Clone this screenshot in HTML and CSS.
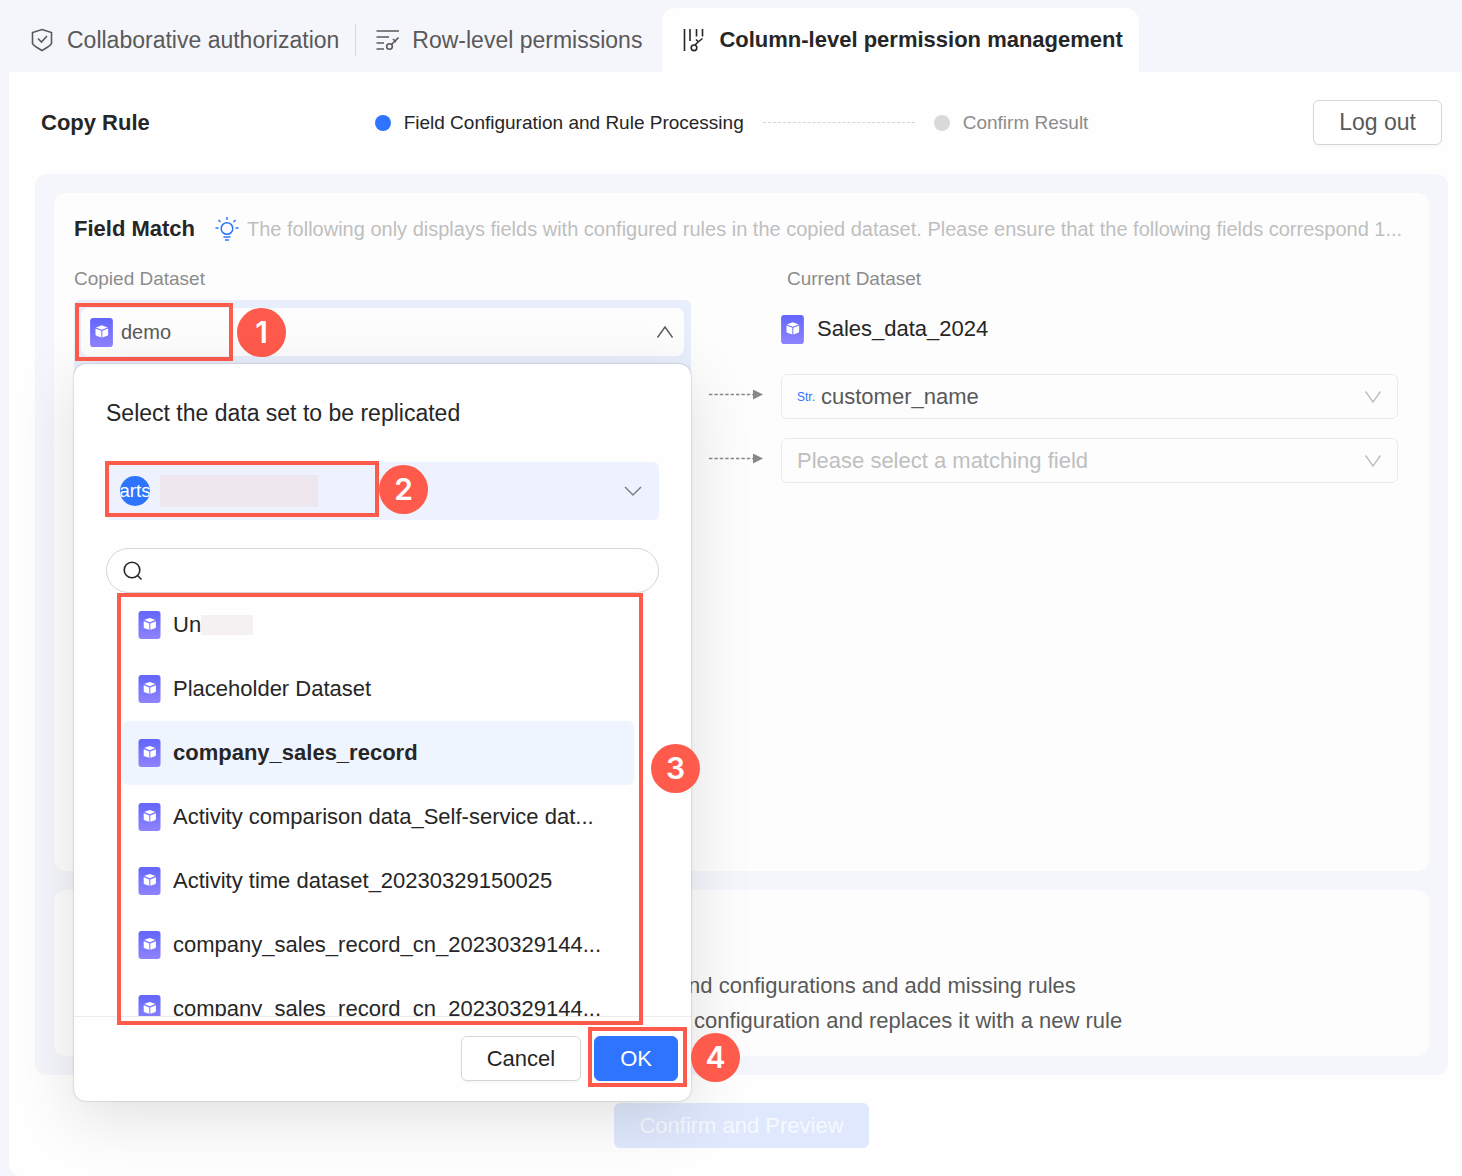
FILE: index.html
```html
<!DOCTYPE html>
<html lang="en">
<head>
    <meta charset="UTF-8">
    <meta name="viewport" content="width=device-width, initial-scale=1.0">
    <title>Column-level permission management</title>
    <link rel="stylesheet" href="styles.css">
</head>
<body>
    <!-- Shared icons -->
    <svg class="sprite" width="0" height="0" aria-hidden="true">
        <defs>
            <linearGradient id="dataset-fill" x1="0" y1="0" x2="0" y2="1">
                <stop offset="0" stop-color="#6366fb"/>
                <stop offset="1" stop-color="#8f83fd"/>
            </linearGradient>
        </defs>
        <symbol id="icon-dataset" viewBox="0 0 22 28">
            <rect width="22" height="28" rx="3" fill="url(#dataset-fill)"/>
            <path d="M11.3 7 17 9.1 11.3 11.3 5.6 9.1Z" fill="#fff"/>
            <path d="M5.2 10.2 10.8 12.4V18.8L6 17.2Q5.2 16.9 5.2 16Z" fill="#fff"/>
            <path d="M17.4 10.2 11.8 12.4V18.8L16.6 17.2Q17.4 16.9 17.4 16Z" fill="#fff"/>
        </symbol>
        <symbol id="icon-arrow" viewBox="0 0 54 10">
            <path d="M0 5H44" stroke="#888" stroke-width="1.6" stroke-dasharray="3.4 2"/>
            <path d="M44 0 54 5 44 10Z" fill="#888"/>
        </symbol>
        <symbol id="icon-down" viewBox="0 0 18 18">
            <path d="M1.5 3.5 9 14 16.5 3.5" fill="none" stroke="currentColor" stroke-width="1.4"/>
        </symbol>
    </svg>

    <nav class="tabs">
        <a href="#" class="tab">
            <svg class="tab-icon" viewBox="0 0 24 24"><path d="M12 1.5 21.5 4.5V15.5Q21 17.5 12 22.5 3 17.5 2.5 15.5V4.5Z"/><path d="M8 10.5 11.5 14 17 8"/></svg>
            Collaborative authorization
        </a>
        <a href="#" class="tab divided">
            <svg class="tab-icon" viewBox="0 0 24 24"><path d="M1.5 3H24M1.5 9H14M1.5 15H9M1.5 21H9"/><circle cx="14.500" cy="18.5" r="2.8"/><path d="M16.500 16.5 23.5 9.5M18 11 21 14"/></svg>
            Row-level permissions
        </a>
        <a href="#" class="tab active">
            <svg class="tab-icon" viewBox="0 0 24 24"><path d="M2.500 1V23M8 1V13M14.500 1V8.5M20.500 1V8.5"/><circle cx="12" cy="19.8" r="2.8"/><path d="M13 17 15.500 14.500 20.500 10.500M14 11.500 16.500 14"/></svg>
            Column-level permission management
        </a>
    </nav>

    <main class="panel">
        <header class="rule-header">
            <h1>Copy Rule</h1>
            <ol class="steps">
                <li class="step current">Field Configuration and Rule Processing</li>
                <li class="step">Confirm Result</li>
            </ol>
            <button class="btn logout">Log out</button>
        </header>

        <div class="workspace">
            <section class="card match-card">
                <div class="card-title">
                    <h2>Field Match</h2>
                    <svg class="bulb" viewBox="0 0 24 24"><circle cx="12" cy="11.5" r="5.8"/><path d="M12 0V3M0.5 11H3.5M20.5 11H23.5M3.5 3 5.5 5M20.5 3 18.5 5M8.5 20H15.5M10 23H14"/></svg>
                    <p>The following only displays fields with configured rules in the copied dataset. Please ensure that the following fields correspond 1...</p>
                </div>

                <div class="match">
                    <div class="match-side">
                        <p class="side-label">Copied Dataset</p>
                        <div class="picker">
                            <button class="picker-value" aria-expanded="true">
                                <svg class="dataset-icon"><use href="#icon-dataset"/></svg>
                                <span>demo</span>
                                <svg class="chevron up"><use href="#icon-down"/></svg>
                            </button>
                            <div class="mark mark-demo"><span class="mark-number">1</span></div>

                            <!-- Data set popover -->
                            <div class="popover">
                                <div class="popover-body">
                                    <h3>Select the data set to be replicated</h3>
                                    <button class="space" aria-haspopup="listbox" aria-label="Workspace">
                                        <span class="avatar">arts</span>
                                        <span class="masked"></span>
                                        <svg class="chevron" viewBox="0 0 18 18"><path d="M1 5 9 13 17 5"/></svg>
                                        <span class="mark mark-space"><span class="mark-number">2</span></span>
                                    </button>
                                    <label class="search">
                                        <svg viewBox="0 0 20 20"><circle cx="9" cy="9" r="7.8"/><path d="M14.5 14.5 18.5 18.5"/></svg>
                                        <input type="text" aria-label="Search data sets">
                                    </label>
                                    <ul class="datasets">
                                        <li><svg class="dataset-icon"><use href="#icon-dataset"/></svg><span>Un</span><span class="masked"></span></li>
                                        <li><svg class="dataset-icon"><use href="#icon-dataset"/></svg><span>Placeholder Dataset</span></li>
                                        <li class="selected"><svg class="dataset-icon"><use href="#icon-dataset"/></svg><span>company_sales_record</span></li>
                                        <li><svg class="dataset-icon"><use href="#icon-dataset"/></svg><span>Activity comparison data_Self-service dat...</span></li>
                                        <li><svg class="dataset-icon"><use href="#icon-dataset"/></svg><span>Activity time dataset_20230329150025</span></li>
                                        <li><svg class="dataset-icon"><use href="#icon-dataset"/></svg><span>company_sales_record_cn_20230329144...</span></li>
                                        <li><svg class="dataset-icon"><use href="#icon-dataset"/></svg><span>company_sales_record_cn_20230329144...</span></li>
                                    </ul>
                                </div>
                                <div class="popover-footer">
                                    <button class="btn">Cancel</button>
                                    <div class="ok-wrap">
                                        <button class="btn primary">OK</button>
                                        <div class="mark mark-ok"><span class="mark-number">4</span></div>
                                    </div>
                                </div>
                                <div class="mark mark-list"><span class="mark-number">3</span></div>
                            </div>
                        </div>
                    </div>

                    <div class="arrows">
                        <svg><use href="#icon-arrow"/></svg>
                        <svg><use href="#icon-arrow"/></svg>
                    </div>

                    <div class="match-side">
                        <p class="side-label indented">Current Dataset</p>
                        <div class="current-dataset">
                            <svg class="dataset-icon"><use href="#icon-dataset"/></svg>
                            <span>Sales_data_2024</span>
                        </div>
                        <div class="field">
                            <span class="field-type">Str.</span>
                            <select aria-label="Field matching row 1"><option>customer_name</option></select>
                            <svg class="chevron"><use href="#icon-down"/></svg>
                        </div>
                        <div class="field empty">
                            <select aria-label="Field matching row 2"><option>Please select a matching field</option></select>
                            <svg class="chevron"><use href="#icon-down"/></svg>
                        </div>
                    </div>
                </div>
            </section>

            <section class="card process-card">
                <div class="process-text">
                    <p>nd configurations and add missing rules</p>
                    <p class="indented">configuration and replaces it with a new rule</p>
                </div>
            </section>
        </div>

        <button class="btn confirm" disabled>Confirm and Preview</button>
    </main>
</body>
</html>
```
FILE: styles.css
```css
* {
    margin: 0;
    padding: 0;
    box-sizing: border-box;
}

body {
    min-height: 100vh;
    display: flex;
    flex-direction: column;
    background: #f5f6fb;
    color: #262626;
    font-family: "Liberation Sans", Arial, sans-serif;
    font-size: 22px;
}

button,
input,
select {
    font: inherit;
    color: inherit;
}

ul,
ol {
    list-style: none;
}

.sprite {
    position: absolute;
}

/* Tabs */
.tabs {
    display: flex;
    padding: 8px 0 0 10px;
}

.tab {
    display: flex;
    align-items: center;
    gap: 13px;
    height: 64px;
    padding: 0 16px 0 20px;
    color: #595959;
    font-size: 23px;
    text-decoration: none;
    white-space: nowrap;
}

.tab-icon {
    width: 24px;
    height: 24px;
    fill: none;
    stroke: currentColor;
    stroke-width: 1.6;
}

.divided {
    padding-right: 20px;
    background: linear-gradient(#d4d6da, #d4d6da) left center / 1px 32px no-repeat;
}

.tab.active {
    background: #fefefe;
    border-radius: 14px 14px 0 0;
    color: #262626;
    font-size: 22px;
    font-weight: bold;
}

/* Main panel */
.panel {
    flex: 1;
    margin-left: 9px;
    padding: 28px 14px 27px 26px;
    background: #fefefe;
    border-radius: 0 0 0 12px;
}

.rule-header {
    display: flex;
    justify-content: space-between;
    align-items: center;
    margin-bottom: 29px;
    padding: 0 6px;
}

h1,
h2 {
    font-size: 22px;
}

.steps {
    display: flex;
    align-items: center;
    font-size: 19px;
}

.step {
    display: flex;
    align-items: center;
    color: #8c8c8c;
}

.step::before {
    content: "";
    width: 16px;
    height: 16px;
    margin-right: 13px;
    border-radius: 50%;
    background: #d9d9d9;
}

.step.current {
    color: #262626;
}

.step.current::before {
    background: #2e74ff;
}

.step.current::after {
    content: "";
    width: 152px;
    margin: 0 19px;
    border-top: 1px dashed #d4d4d4;
}

.btn {
    height: 45px;
    padding: 0 25px;
    border: 1px solid #d6d6d6;
    border-radius: 6px;
    background: #fff;
    box-shadow: 0 2px 2px rgba(0, 0, 0, 0.03);
}

.btn.primary {
    border-color: #2e74ff;
    background: #2e74ff;
    color: #fff;
}

.logout {
    color: #595959;
    font-size: 23px;
}

.workspace {
    display: flex;
    flex-direction: column;
    gap: 19px;
    padding: 19px;
    border-radius: 12px;
    background: #f5f6fb;
}

.card {
    border-radius: 12px;
    background: #fdfdfd;
}

.match-card {
    min-height: 678px;
    padding: 18px 20px;
}

.card-title {
    display: flex;
    align-items: center;
    height: 36px;
}

.card-title p {
    flex: 1;
    min-width: 0;
    overflow: hidden;
    color: #bfbfbf;
    font-size: 20px;
    white-space: nowrap;
}

.bulb {
    width: 24px;
    height: 24px;
    margin: 0 8px 0 20px;
    fill: none;
    stroke: #2e74ff;
    stroke-width: 1.5;
}

.match {
    display: flex;
    gap: 18px;
    margin: 18px 11px 0 0;
}

.match-side {
    flex: 1;
    min-width: 0;
}

.side-label {
    height: 35px;
    color: #8c8c8c;
    font-size: 19px;
    line-height: 28px;
}

.indented {
    padding-left: 6px;
}

.dataset-icon {
    flex: none;
    width: 23px;
    height: 29px;
}

.arrows {
    display: flex;
    flex-direction: column;
    gap: 19px;
    padding-top: 107px;
}

.arrows svg {
    width: 54px;
    height: 45px;
}

.current-dataset {
    display: flex;
    align-items: center;
    gap: 13px;
    height: 58px;
    margin-bottom: 16px;
}

.field {
    display: flex;
    align-items: center;
    gap: 6px;
    height: 45px;
    margin-bottom: 19px;
    padding: 0 15px;
    border: 1px solid #ebebeb;
    border-radius: 6px;
    color: #595959;
}

.field-type {
    color: #2e74ff;
    font-size: 12px;
}

.field select {
    flex: 1;
    min-width: 0;
    border: 0;
    outline: 0;
    background: none;
    appearance: none;
}

.field.empty {
    color: #bfbfbf;
}

.chevron {
    width: 18px;
    height: 18px;
    fill: none;
    stroke-width: 1.5;
}

.field .chevron {
    color: #bfbfbf;
}

/* Copied dataset picker */
.picker {
    position: relative;
    height: 80px;
    padding: 8px 7px;
    border-radius: 6px 6px 0 0;
    background: #e8eefc;
}

.picker-value {
    display: flex;
    align-items: center;
    gap: 8px;
    width: 100%;
    height: 48px;
    padding: 0 10px 0 9px;
    border: 0;
    border-radius: 8px;
    background: #fdfdfd;
    color: #595959;
    font-size: 20px;
}

.picker-value .chevron {
    margin-left: auto;
}

.chevron.up {
    transform: rotate(180deg);
}

.popover {
    position: absolute;
    top: 64px;
    left: 0;
    z-index: 1;
    width: 100%;
    border-radius: 12px;
    background: #fefefe;
    box-shadow: 0 0 2px rgba(0, 0, 0, 0.3), 0 16px 64px rgba(0, 0, 0, 0.12);
}

.popover-body {
    padding: 32px 32px 0;
}

.popover h3 {
    margin-bottom: 32px;
    font-size: 23px;
    font-weight: normal;
    line-height: 34px;
}

.space {
    position: relative;
    display: flex;
    align-items: center;
    gap: 10px;
    width: 100%;
    height: 58px;
    margin-bottom: 28px;
    padding: 0 17px 0 14px;
    border: 0;
    border-radius: 6px;
    background: #eef2fe;
}

.avatar {
    display: flex;
    justify-content: center;
    width: 30px;
    height: 30px;
    overflow: hidden;
    border-radius: 50%;
    background: #2e74ff;
    color: #fff;
    font-size: 19px;
    line-height: 30px;
}

.space .masked {
    width: 158px;
    height: 32px;
    background: #eee8ee;
}

.space .chevron {
    margin-left: auto;
    stroke: #7c7f88;
}

.search {
    display: flex;
    align-items: center;
    gap: 12px;
    height: 45px;
    padding: 0 16px;
    border: 1px solid #d4d5d7;
    border-radius: 23px;
}

.search svg {
    width: 20px;
    height: 20px;
    fill: none;
    stroke: #262626;
    stroke-width: 1.6;
}

.search input {
    flex: 1;
    min-width: 0;
    border: 0;
    outline: 0;
    background: none;
}

.datasets {
    height: 423px;
    margin: 0 25px 0 16px;
    overflow-y: auto;
    scrollbar-width: none;
}

.datasets li {
    display: flex;
    align-items: center;
    height: 64px;
    padding-left: 16px;
    border-radius: 6px;
    white-space: nowrap;
}

.datasets .dataset-icon {
    height: 28px;
    margin-right: 12px;
}

.datasets .masked {
    width: 52px;
    height: 20px;
    background: #f5f1f3;
}

.datasets .selected {
    background: #eff5fe;
    font-weight: bold;
}

.popover-footer {
    display: flex;
    justify-content: flex-end;
    gap: 13px;
    padding: 19px 13px 20px;
    border-top: 1px solid #ececec;
}

.ok-wrap {
    position: relative;
}

/* Numbered highlights */
.mark {
    position: absolute;
    border: 4px solid #ff5b4c;
    pointer-events: none;
}

.mark-number {
    position: absolute;
    top: 50%;
    left: 100%;
    width: 49px;
    height: 49px;
    margin: -24px 0 0 8px;
    border-radius: 50%;
    background: #ff5b4c;
    color: #fff;
    font-family: Inter, sans-serif;
    font-size: 30px;
    font-weight: 600;
    line-height: 49px;
    text-align: center;
}

.mark-demo {
    top: 3px;
    left: 1px;
    width: 158px;
    height: 58px;
}

.mark-space {
    top: -1px;
    left: -1px;
    width: 274px;
    height: 56px;
}

.mark-space .mark-number {
    margin-left: 4px;
}

.mark-list {
    inset: 229px 48px 76px 43px;
}

.mark-list .mark-number {
    margin: -65px 0 0 12px;
}

.mark-ok {
    inset: -9px -9px -6px -6px;
}

/* Rule processing */
.process-card {
    display: flex;
    flex-direction: column;
    justify-content: flex-end;
    min-height: 166px;
    padding: 18px 20px;
}

.process-text {
    align-self: flex-end;
    width: 54%;
    color: #595959;
    line-height: 35px;
}

.confirm {
    display: block;
    margin: 28px auto 0;
    border: 0;
    background: #dfe8fd;
    color: #f6f9ff;
    box-shadow: none;
}
```
